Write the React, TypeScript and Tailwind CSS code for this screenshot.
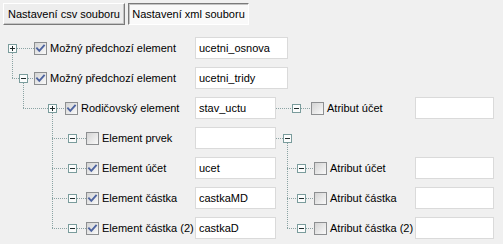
import React, { useId } from "react";

const FONT = { fontFamily: '"Liberation Sans", Arial, sans-serif' };

function Expander({ plus = false }: { plus?: boolean }) {
  return (
    <svg width="9" height="9" viewBox="0 0 9 9" className="block shrink-0 self-start mt-[11px]" shapeRendering="crispEdges">
      <rect x="0.5" y="0.5" width="8" height="8" fill="#fbfcfc" stroke="#7a9c9c" />
      <line x1="2" y1="4.5" x2="7" y2="4.5" stroke="#1e2b2b" />
      {plus && <line x1="4.5" y1="2" x2="4.5" y2="7" stroke="#1e2b2b" />}
    </svg>
  );
}

function Check({ checked = false }: { checked?: boolean }) {
  const id = useId().replace(/:/g, "");
  return (
    <svg width="13" height="13" viewBox="0 0 13 13" className="block shrink-0 self-start mt-[9px]">
      <defs>
        <linearGradient id={id} x1="0" y1="0" x2="1" y2="1">
          <stop offset="0" stopColor="#d2d2d2" />
          <stop offset="1" stopColor="#fbfbfb" />
        </linearGradient>
      </defs>
      <rect x="0.5" y="0.5" width="12" height="12" fill={`url(#${id})`} stroke="#8d8f91" shapeRendering="crispEdges" />
      {checked && (
        <path d="M3 6.3 L5.3 8.8 L10 3.6" fill="none" stroke="#4e64a0" strokeWidth="1.9" strokeLinecap="square" />
      )}
    </svg>
  );
}

function TextBox({ value = "", w }: { value?: string; w: string }) {
  return (
    <div className={`${w} h-[22px] shrink-0 bg-white border border-[#dadada] flex items-center pl-[3px] text-[11px] text-black`}>
      {value}
    </div>
  );
}

function Label({ children }: { children: React.ReactNode }) {
  return <span className="ml-[3px] text-[11px] text-black whitespace-nowrap">{children}</span>;
}

type Line = [number, number, number, number];

export default function App() {
  const c = (i: number) => 15 + 30 * (i - 1);
  const lines: Line[] = [];
  // row1
  lines.push([17, c(1), 34, c(1)]);
  lines.push([12, 20, 12, c(2)]);
  // row2
  lines.push([12, c(2), 19, c(2)]);
  lines.push([28, c(2), 34, c(2)]);
  lines.push([23, c(2) + 5, 23, c(3)]);
  // row3
  lines.push([23, c(3), 48, c(3)]);
  lines.push([57, c(3), 65, c(3)]);
  lines.push([52, c(3) + 5, 52, c(7)]);
  for (let i = 4; i <= 7; i++) {
    lines.push([52, c(i), 68, c(i)]);
    lines.push([77, c(i), 86, c(i)]);
  }
  // right
  lines.push([276, c(3), 292, c(3)]);
  lines.push([301, c(3), 311, c(3)]);
  lines.push([276, c(4), 283, c(4)]);
  lines.push([287, c(4) + 5, 287, c(7)]);
  for (let i = 5; i <= 7; i++) {
    lines.push([287, c(i), 297, c(i)]);
    lines.push([306, c(i), 314, c(i)]);
  }

  const leafRows = [
    { label: "Element prvek", checked: false, value: "" },
    { label: "Element účet", checked: true, value: "ucet" },
    { label: "Element částka", checked: true, value: "castkaMD" },
    { label: "Element částka (2)", checked: true, value: "castkaD" },
  ];
  const attrs: Record<number, string> = { 1: "Atribut účet", 2: "Atribut částka", 3: "Atribut částka (2)" };

  return (
    <div className="w-[503px] h-[244px] bg-[#f0f0f0] overflow-hidden" style={FONT}>
      <div className="flex h-[33px] pt-[3px] pl-[3px] gap-[3px]">
        <div className="w-[122px] h-[22px] flex items-center justify-center text-[11px] text-black bg-[#ededed] border border-t-white border-l-white border-r-[#7a7a7a] border-b-[#7a7a7a] shadow-[inset_-1px_-1px_0_#c4c4c4]">
          Nastavení csv souboru
        </div>
        <div className="w-[121px] h-[22px] flex items-center justify-center text-[11px] text-black bg-[#f9f9f9] border border-t-[#7a7a7a] border-l-[#7a7a7a] border-r-white border-b-white shadow-[inset_1px_1px_0_#c4c4c4]">
          Nastavení xml souboru
        </div>
      </div>

      <div className="relative">
        <svg className="absolute left-0 top-0 pointer-events-none" width="503" height="211" shapeRendering="crispEdges">
          {lines.map(([x1, y1, x2, y2], k) => (
            <line
              key={k}
              x1={x1 === x2 ? x1 + 0.5 : x1}
              y1={y1 === y2 ? y1 + 0.5 : y1}
              x2={x1 === x2 ? x2 + 0.5 : x2}
              y2={y1 === y2 ? y2 + 0.5 : y2}
              stroke="#8aa3a3"
              strokeDasharray="1 1"
            />
          ))}
        </svg>

        <div className="relative flex flex-col">
          {/* row 1 */}
          <div className="h-[30px] flex items-center">
            <div className="w-[195px] flex items-center h-full pl-[8px]">
              <Expander plus />
              <div className="w-[17px] shrink-0" />
              <Check checked />
              <Label>Možný předchozí element</Label>
            </div>
            <TextBox w="w-[93px]" value="ucetni_osnova" />
          </div>
          {/* row 2 */}
          <div className="h-[30px] flex items-center">
            <div className="w-[195px] flex items-center h-full pl-[19px]">
              <Expander />
              <div className="w-[6px] shrink-0" />
              <Check checked />
              <Label>Možný předchozí element</Label>
            </div>
            <TextBox w="w-[93px]" value="ucetni_tridy" />
          </div>
          {/* row 3 */}
          <div className="h-[30px] flex items-center">
            <div className="w-[195px] flex items-center h-full pl-[48px]">
              <Expander plus />
              <div className="w-[8px] shrink-0" />
              <Check checked />
              <Label>Rodičovský element</Label>
            </div>
            <TextBox w="w-[81px]" value="stav_uctu" />
            <div className="w-[139px] flex items-center h-full pl-[16px]">
              <Expander />
              <div className="w-[10px] shrink-0" />
              <Check />
              <Label>Atribut účet</Label>
            </div>
            <TextBox w="w-[79px]" />
          </div>
          {leafRows.map((r, i) => (
            <div key={i} className="h-[30px] flex items-center">
              <div className="w-[195px] flex items-center h-full pl-[68px]">
                <Expander />
                <div className="w-[9px] shrink-0" />
                <Check checked={r.checked} />
                <Label>{r.label}</Label>
              </div>
              <TextBox w="w-[81px]" value={r.value} />
              {i === 0 ? (
                <div className="w-[139px] flex items-center h-full pl-[7px]">
                  <Expander />
                </div>
              ) : (
                <>
                  <div className="w-[139px] flex items-center h-full pl-[21px]">
                    <Expander />
                    <div className="w-[8px] shrink-0" />
                    <Check />
                    <Label>{attrs[i]}</Label>
                  </div>
                  <TextBox w="w-[79px]" />
                </>
              )}
            </div>
          ))}
        </div>
      </div>
    </div>
  );
}
